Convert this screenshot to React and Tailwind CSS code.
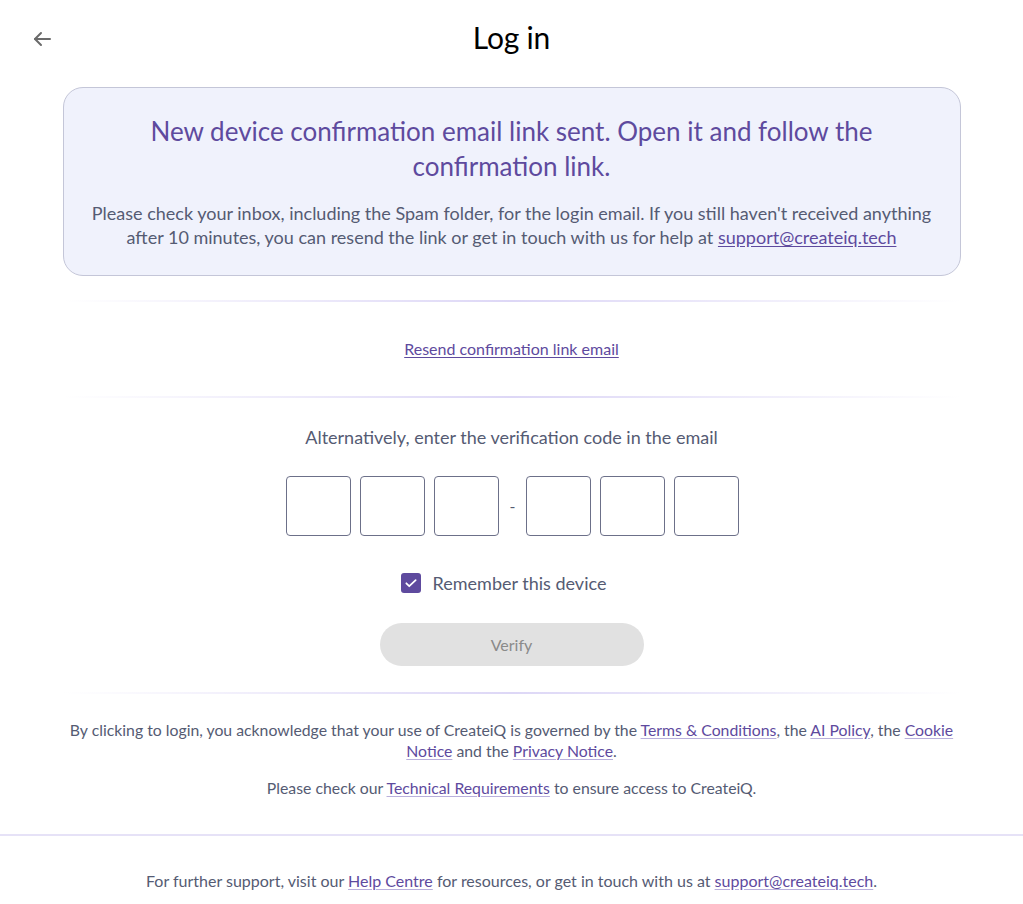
export default function App() {
  return (
    <div className="min-h-screen bg-white font-['Lato','Noto_Sans',sans-serif] text-[#555b73]">
      {/* Header */}
      <header className="relative h-[78px] flex items-center justify-center pb-[4px]">
        <button className="absolute left-[30px] top-[27px] text-[#6b6b6b]" aria-label="Back">
          <svg width="24" height="24" viewBox="0 0 24 24" fill="none" stroke="currentColor" strokeWidth="2" strokeLinecap="round" strokeLinejoin="round">
            <path d="M20 12H5" />
            <path d="M11 6l-6 6 6 6" />
          </svg>
        </button>
        <h1 className="text-[30px] text-black tracking-[-0.2px]">Log in</h1>
      </header>

      <main className="w-[898px] mx-auto">
        {/* Notice */}
        <div className="mt-[9px] rounded-[20px] border border-[#c4c6d8] bg-[#f0f2fc] px-6 pt-[26px] pb-[26px] text-center">
          <h2 className="text-[26px] leading-[35px] text-[#5e4a9e] px-[60px]">
            New device confirmation email link sent. Open it and follow the confirmation link.
          </h2>
          <p className="mt-[17px] text-[18px] leading-[24px] text-[#555b73]">
            Please check your inbox, including the Spam folder, for the login email. If you still haven't received anything after 10 minutes, you can resend the link or get in touch with us for help at{' '}
            <a href="#" className="text-[#5e4a9e] underline underline-offset-2">support@createiq.tech</a>
          </p>
        </div>

        <Divider className="mt-[24px]" />

        <div className="h-[94px] flex items-center justify-center">
          <a href="#" className="text-[16px] text-[#5e4a9e] underline underline-offset-2">Resend confirmation link email</a>
        </div>

        <Divider />

        {/* Code entry */}
        <div className="flex flex-col items-center">
          <p className="mt-[27px] text-[18px] leading-[24px]">Alternatively, enter the verification code in the email</p>
          <div className="mt-[27px] flex items-center gap-[9px] pl-[2px]">
            <CodeBox />
            <CodeBox />
            <CodeBox />
            <span className="w-[9px] text-center text-[#555b73]">-</span>
            <CodeBox />
            <CodeBox />
            <CodeBox />
          </div>
          <label className="mt-[36px] mr-[16px] flex items-center gap-[12px] text-[18px] leading-[22px]">
            <span className="w-[20px] h-[20px] rounded-[3px] bg-[#5e4a9e] flex items-center justify-center">
              <svg width="14" height="14" viewBox="0 0 24 24" fill="none" stroke="white" strokeWidth="3" strokeLinecap="round" strokeLinejoin="round">
                <path d="M4 12.5l5 5L20 7" />
              </svg>
            </span>
            Remember this device
          </label>
          <button className="mt-[29px] w-[264px] h-[43px] rounded-full bg-[#e1e1e1] text-[16px] text-[#8a8a8a]">Verify</button>
        </div>

        <Divider className="mt-[26px]" />

        {/* Terms */}
        <div className="text-center text-[15.8px] leading-[21px]">
          <p className="mt-[25px]">
            By clicking to login, you acknowledge that your use of CreateiQ is governed by the <L>Terms &amp; Conditions</L>, the <L>AI Policy</L>, the <L>Cookie Notice</L> and the <L>Privacy Notice</L>.
          </p>
          <p className="mt-[16px]">
            Please check our <L>Technical Requirements</L> to ensure access to CreateiQ.
          </p>
        </div>
      </main>

      <footer className="mt-[36px] border-t-2 border-[#e6e2f7]">
        <p className="pt-[34px] pb-[12px] text-center text-[16px] leading-[21px]">
          For further support, visit our <L>Help Centre</L> for resources, or get in touch with us at <L>support@createiq.tech</L>.
        </p>
      </footer>
    </div>
  );
}

function Divider({ className = '' }) {
  return <div className={`h-[2px] bg-gradient-to-r from-transparent via-[#ddd7f6] to-transparent ${className}`} />;
}

function CodeBox() {
  return <input className="w-[65px] h-[60px] rounded-[4px] border border-[#6c7089] bg-white text-center text-[22px] outline-none" />;
}

function L({ children }) {
  return (
    <a href="#" className="text-[#5e4a9e] underline decoration-[#b9b0dc] underline-offset-2">
      {children}
    </a>
  );
}
